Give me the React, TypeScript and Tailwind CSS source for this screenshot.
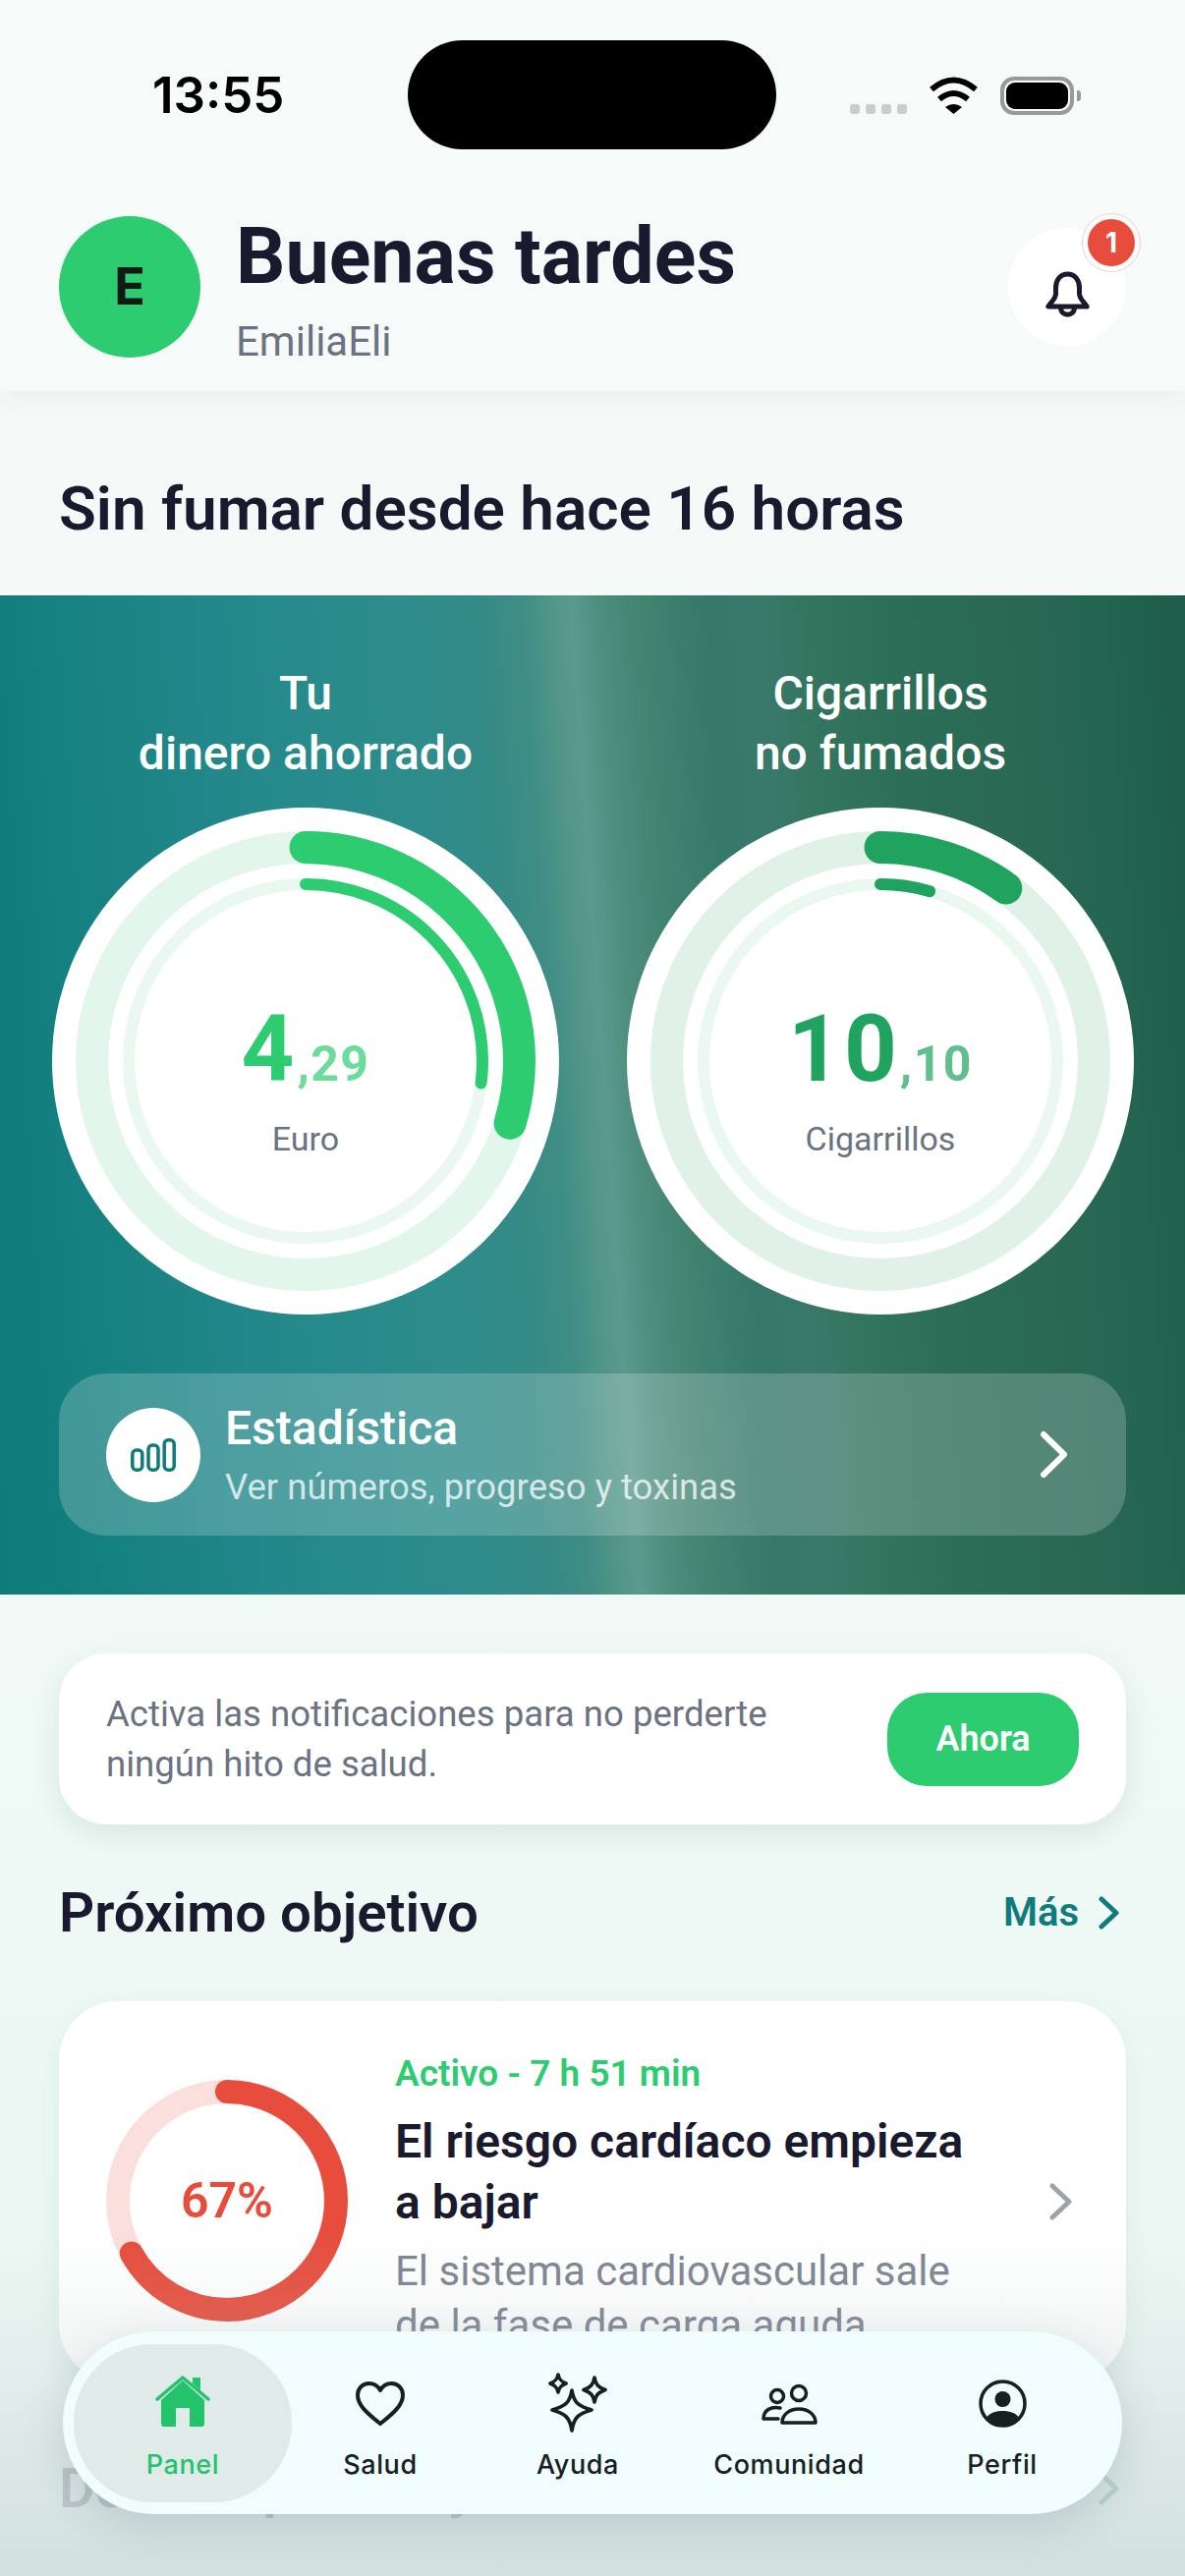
const INTER = "font-['Inter','Liberation_Sans',sans-serif]";

function Ring({ pct, innerPct, color, track, innerTrack }: { pct: number; innerPct: number; color: string; track: string; innerTrack: string }) {
  return (
    <svg width="516" height="516" viewBox="0 0 516 516" className="[grid-area:1/1]">
      <circle cx="258" cy="258" r="217.5" fill="none" stroke={track} strokeWidth="33" />
      <circle cx="258" cy="258" r="180" fill="none" stroke={innerTrack} strokeWidth="12" />
      <circle cx="258" cy="258" r="217.5" fill="none" stroke={color} strokeWidth="33" strokeLinecap="round" pathLength={100} strokeDasharray={`${pct} 100`} transform="rotate(-90 258 258)" />
      <circle cx="258" cy="258" r="180" fill="none" stroke={color} strokeWidth="12" strokeLinecap="round" pathLength={100} strokeDasharray={`${innerPct} 100`} transform="rotate(-90 258 258)" />
    </svg>
  );
}

function Counter(props: { title: [string, string]; whole: string; cents: string; unit: string; pct: number; innerPct: number; color: string; track: string; textClass: string }) {
  return (
    <div className="flex w-[516px] flex-col items-center">
      <div className="text-center text-[48px] leading-[61px] font-medium text-white">
        {props.title[0]}
        <br />
        {props.title[1]}
      </div>
      <div className="mt-[25px] grid h-[516px] w-[516px] place-items-center rounded-full bg-white">
        <Ring pct={props.pct} innerPct={props.innerPct} color={props.color} track={props.track} innerTrack="#EBF8F2" />
        <div className="z-10 flex flex-col items-center pt-[36px] [grid-area:1/1]">
          <div className={`flex items-baseline font-bold ${props.textClass}`}>
            <span className="text-[94px] leading-[100px] tracking-[3px]">{props.whole}</span>
            <span className="text-[50px] leading-[100px] tracking-[1.5px] opacity-70">,{props.cents}</span>
          </div>
          <div className="mt-[6px] text-[34px] leading-[40px] text-[#6B7280]">{props.unit}</div>
        </div>
      </div>
    </div>
  );
}

function NavItem({ label, width, active, children }: { label: string; width: string; active?: boolean; children: React.ReactNode }) {
  return (
    <div className={`flex flex-col items-center ${width} ${active ? "rounded-[80px] bg-[#DFEAE9] text-[#22C36A]" : "text-[#15201F]"}`}>
      <div className="flex h-[87px] items-end pb-[2px]">{children}</div>
      <div className={`mt-[19px] text-[27px] leading-[34px] font-medium tracking-[0.6px] ${INTER}`}>{label}</div>
    </div>
  );
}

export default function App() {
  return (
    <div className="relative h-[2622px] w-[1206px] overflow-hidden bg-[#F1F9F6] font-['Roboto','Liberation_Sans',sans-serif] text-[#1A1A2E]">
      {/* header */}
      <header className="relative z-10 h-[398px] bg-[#F6FBF9] shadow-[0_8px_24px_rgba(30,60,60,0.05)]">
        <div className="flex h-[152px] items-start pt-[41px]">
          <div className={`w-[415px] pt-[27px] pl-[155px] text-[51px] leading-[58px] font-semibold text-black ${INTER}`}>13:55</div>
          <div className="h-[111px] w-[375px] rounded-[56px] bg-black" />
          <div className="flex items-start pt-[37px]">
            <div className="mt-[28px] ml-[75px] flex gap-[6px]">
              <div className="h-[10px] w-[10px] rounded-[3px] bg-[#C9CDCD]" />
              <div className="h-[10px] w-[10px] rounded-[3px] bg-[#C9CDCD]" />
              <div className="h-[10px] w-[10px] rounded-[3px] bg-[#C9CDCD]" />
              <div className="h-[10px] w-[10px] rounded-[3px] bg-[#C9CDCD]" />
            </div>
            <svg width="51" height="38" viewBox="0 0 51 38" className="ml-[22px]">
              <path d="M3 13Q25.5-6 48 13" fill="none" stroke="#000" strokeWidth="6" />
              <path d="M11 23Q25.5 11 40 23" fill="none" stroke="#000" strokeWidth="6" />
              <path d="M17 31Q25.5 25 34 31L25.5 38Z" fill="#000" />
            </svg>
            <div className="ml-[22px] flex h-[39px] w-[75px] items-center rounded-[14px] border-[4px] border-[#999] p-[2px]">
              <div className="h-full w-full rounded-[9px] bg-black" />
            </div>
            <div className="mt-[14px] ml-[3px] h-[11px] w-[4px] rounded-r-[3px] bg-[#999]" />
          </div>
        </div>
        <div className="mt-[68px] flex h-[144px] items-center px-[60px]">
          <div className={`flex h-[144px] w-[144px] items-center justify-center rounded-full bg-[#2ECC71] text-[52px] font-bold text-[#0F1A14] ${INTER}`}>E</div>
          <div className="ml-[36px] flex-1 self-start pt-[3px]">
            <div className="text-[79px] leading-[76px] font-bold">Buenas tardes</div>
            <div className="mt-[25px] text-[42px] leading-[48px] text-[#6B7280]">EmiliaEli</div>
          </div>
          <div className="relative flex h-[120px] w-[120px] items-center justify-center rounded-full bg-white">
            <svg width="45" height="47" viewBox="0 0 45 47" fill="none" stroke="#1A1A2E" strokeWidth="5" strokeLinecap="round" strokeLinejoin="round" className="mt-[14px]">
              <path d="M22.5 3C15 3 10.500 9 10.500 17V23C10.500 28 6 31 2.800 36H42.200C39 31 34.500 28 34.500 23V17C34.500 9 30 3 22.500 3Z" />
              <path d="M15.500 37C15.500 46.500 29.500 46.500 29.500 37" />
            </svg>
            <div className="absolute top-[-15px] right-[-15px] flex h-[60px] w-[60px] items-center justify-center rounded-full border border-[#F5CFCB] bg-white/70">
              <div className={`flex h-[48px] w-[48px] items-center justify-center rounded-full bg-[#E74C3C] text-[28px] font-bold text-white ${INTER}`}>1</div>
            </div>
          </div>
        </div>
      </header>

      <div className="flex h-[208px] items-center bg-[#F5FAF8] px-[60px] pt-[32px]">
        <h1 className="text-[62px] leading-[68px] font-semibold">Sin fumar desde hace 16 horas</h1>
      </div>

      {/* hero counters */}
      <section className="h-[1017px] bg-[linear-gradient(86deg,#0D7C7B_0%,#14807F_8%,#22878A_21%,#2E8D8C_38%,#338A86_43%,#3F8D85_47%,#529688_49.500%,#5B9A8E_51%,#4C8D7C_53.500%,#40836F_57%,#34786A_62%,#39796A_66%,#33755E_70%,#2C6E58_76%,#2A6A55_85%,#226350_95%,#1C5C49_100%)] pt-[69px]">
        <div className="flex gap-[69px] pl-[53px]">
          <Counter title={["Tu", "dinero ahorrado"]} whole="4" cents="29" unit="Euro" pct={29.7} innerPct={27} color="#2ECC71" track="#E3F6EC" textClass="text-[#2ECC71]" />
          <Counter title={["Cigarrillos", "no fumados"]} whole="10" cents="10" unit="Cigarrillos" pct={10} innerPct={4.5} color="#1FA35F" track="#E0F1E8" textClass="text-[#1FA35F]" />
        </div>
        <div className="mx-[60px] mt-[60px] flex h-[165px] items-center rounded-[48px] bg-white/20 pr-[59px] pl-[48px]">
          <div className="flex h-[96px] w-[96px] items-center justify-center rounded-full bg-white">
            <svg width="46" height="34" viewBox="0 0 46 34" fill="none" stroke="#0F7C7B" strokeWidth="3.500">
              <rect x="1.800" y="12" width="10" height="20.200" rx="4" />
              <rect x="18" y="7" width="10" height="25.200" rx="4" />
              <rect x="34.200" y="1.800" width="10" height="30.400" rx="4" />
            </svg>
          </div>
          <div className="ml-[25px] flex-1 pt-[2px]">
            <div className="text-[48px] leading-[52px] font-medium text-white">Estadística</div>
            <div className="mt-[12px] text-[36.5px] leading-[44px] text-white/75">Ver números, progreso y toxinas</div>
          </div>
          <svg width="29" height="49" viewBox="0 0 29 49" fill="none" stroke="#fff" strokeWidth="6" strokeLinecap="round" strokeLinejoin="round">
            <path d="M4 4L25 24.500L4 45" />
          </svg>
        </div>
      </section>

      {/* below the fold */}
      <main className="h-[999px] bg-[linear-gradient(180deg,#F0F9F5_0%,#EAF7F3_100%)] px-[60px] pt-[60px]">
        <div className="flex h-[174px] items-center justify-between rounded-[48px] bg-white pr-[48px] pl-[48px] shadow-[0_10px_28px_rgba(40,80,80,0.10)]">
          <p className="text-[36.6px] leading-[51px] text-[#6B7280]">
            Activa las notificaciones para no perderte
            <br />
            ningún hito de salud.
          </p>
          <div className="flex h-[95px] w-[195px] items-center justify-center rounded-[40px] bg-[#2ECC71] text-[36px] font-semibold text-white">Ahora</div>
        </div>

        <div className="mt-[63px] flex h-[54px] items-center justify-between">
          <h2 className="text-[56.4px] leading-[54px] font-semibold">Próximo objetivo</h2>
          <div className="flex items-center pr-[6px] text-[#0F7C7B]">
            <span className="text-[40px] font-semibold">Más</span>
            <svg width="22" height="34" viewBox="0 0 22 34" fill="none" stroke="currentColor" strokeWidth="5" strokeLinecap="round" strokeLinejoin="round" className="ml-[20px]">
              <path d="M3 3L18 17L3 31" />
            </svg>
          </div>
        </div>

        <div className="mt-[63px] flex h-[388px] overflow-hidden rounded-[60px] bg-white pt-[49px] pl-[48px] shadow-[0_10px_28px_rgba(40,80,80,0.08)]">
          <div className="mt-[31px] grid h-[246px] w-[246px] shrink-0 place-items-center">
            <svg width="246" height="246" viewBox="0 0 246 246" className="[grid-area:1/1]">
              <circle cx="123" cy="123" r="111" fill="none" stroke="#FADFDC" strokeWidth="24" />
              <circle cx="123" cy="123" r="111" fill="none" stroke="#E74C3C" strokeWidth="24" strokeLinecap="round" pathLength={100} strokeDasharray="67 100" transform="rotate(-90 123 123)" />
            </svg>
            <span className="text-[50px] font-semibold text-[#E74C3C] [grid-area:1/1]">67%</span>
          </div>
          <div className="ml-[48px] w-[620px]">
            <div className="text-[37px] leading-[50px] font-semibold text-[#2ECC71]">Activo - 7 h 51 min</div>
            <div className="mt-[13px] text-[48px] leading-[62px] font-semibold">
              El riesgo cardíaco empieza
              <br />a bajar
            </div>
            <div className="mt-[11px] text-[42px] leading-[55px] text-[#7C8291]">
              El sistema cardiovascular sale
              <br />
              de la fase de carga aguda
            </div>
          </div>
          <svg width="24" height="38" viewBox="0 0 24 38" fill="none" stroke="#9CA3AF" strokeWidth="5" strokeLinecap="round" strokeLinejoin="round" className="mt-[136px] ml-[46px]">
            <path d="M3 3L20 19L3 35" />
          </svg>
        </div>

        <div className="mt-[81px] flex h-[54px] items-center justify-between pr-[6px] opacity-25">
          <h2 className="text-[56.4px] leading-[54px] font-semibold">Desafío para hoy</h2>
          <svg width="22" height="34" viewBox="0 0 22 34" fill="none" stroke="#0F7C7B" strokeWidth="5" strokeLinecap="round" strokeLinejoin="round">
            <path d="M3 3L18 17L3 31" />
          </svg>
        </div>
      </main>

      {/* fade behind the tab bar */}
      <div className="pointer-events-none absolute right-0 bottom-0 left-0 z-20 h-[352px] bg-[linear-gradient(180deg,rgba(190,205,205,0)_0%,rgba(190,205,205,0.55)_100%)]" />

      {/* tab bar */}
      <nav className="absolute top-[2373px] left-[64px] z-30 flex h-[186px] w-[1078px] items-center rounded-[93px] bg-[#F1FCFC] pl-[11px] shadow-[0_12px_40px_rgba(60,90,90,0.18)]">
        <NavItem label="Panel" width="h-[161px] w-[222px]" active>
          <svg width="56" height="53" viewBox="0 0 56 53">
            <path d="M6 25L28 5L50 25V49C50 51 49 52 47 52H35V33H21V52H9C7 52 6 51 6 49Z" fill="currentColor" />
            <path d="M2 24L28 2L54 24" fill="none" stroke="currentColor" strokeWidth="3.500" strokeLinecap="round" strokeLinejoin="round" />
            <path d="M38 2H46V15L38 8Z" fill="currentColor" />
          </svg>
        </NavItem>
        <NavItem label="Salud" width="h-[161px] w-[180px]">
          <svg width="50" height="45" viewBox="0 0 50 45" fill="none" stroke="currentColor" strokeWidth="4" strokeLinejoin="round" className="mb-[2px]">
            <path d="M25 43C14 34 2 25 2 14C2 7 7 2 13.500 2C18.500 2 22.500 4.500 25 9C27.500 4.500 31.500 2 36.500 2C43 2 48 7 48 14C48 25 36 34 25 43Z" />
          </svg>
        </NavItem>
        <NavItem label="Ayuda" width="h-[161px] w-[222px]">
          <svg width="60" height="62" viewBox="0 0 60 62" fill="none" stroke="currentColor" strokeWidth="3.700" strokeLinejoin="round" className="-mb-[5px]">
            <path d="M24 19C26 31 30 35 44 39C30 43 26 47 24 60C22 47 18 43 4 39C18 35 22 31 24 19Z" />
            <path d="M10 3C11 8 13 10 18 12C13 14 11 16 10 21C9 16 7 14 2 12C7 10 9 8 10 3Z" />
            <path d="M47 6C48 13 51 16 58 18.500C51 21 48 24 47 31C46 24 43 21 36 18.500C43 16 46 13 47 6Z" />
          </svg>
        </NavItem>
        <NavItem label="Comunidad" width="h-[161px] w-[208px]">
          <svg width="57" height="42" viewBox="0 0 57 42" fill="none" stroke="currentColor" strokeWidth="3.500" strokeLinecap="round" strokeLinejoin="round" className="mb-[3px]">
            <circle cx="16" cy="13" r="6.500" />
            <circle cx="38" cy="10" r="7.500" />
            <path d="M19 25C10 23 2 27 2 36H17" />
            <path d="M21 40C21 32 28 26 38 26C48 26 55 32 55 40Z" />
          </svg>
        </NavItem>
        <NavItem label="Perfil" width="h-[161px] w-[226px]">
          <svg width="49" height="49" viewBox="0 0 49 49">
            <circle cx="24.500" cy="24.500" r="22.500" fill="none" stroke="currentColor" strokeWidth="3.500" />
            <circle cx="24.500" cy="20" r="8" fill="currentColor" />
            <path d="M8 39C11 34 17 32 24.500 32C32 32 38 34 41 39C37 45 31 48 24.500 48C18 48 12 45 8 39Z" fill="currentColor" />
          </svg>
        </NavItem>
      </nav>
    </div>
  );
}
